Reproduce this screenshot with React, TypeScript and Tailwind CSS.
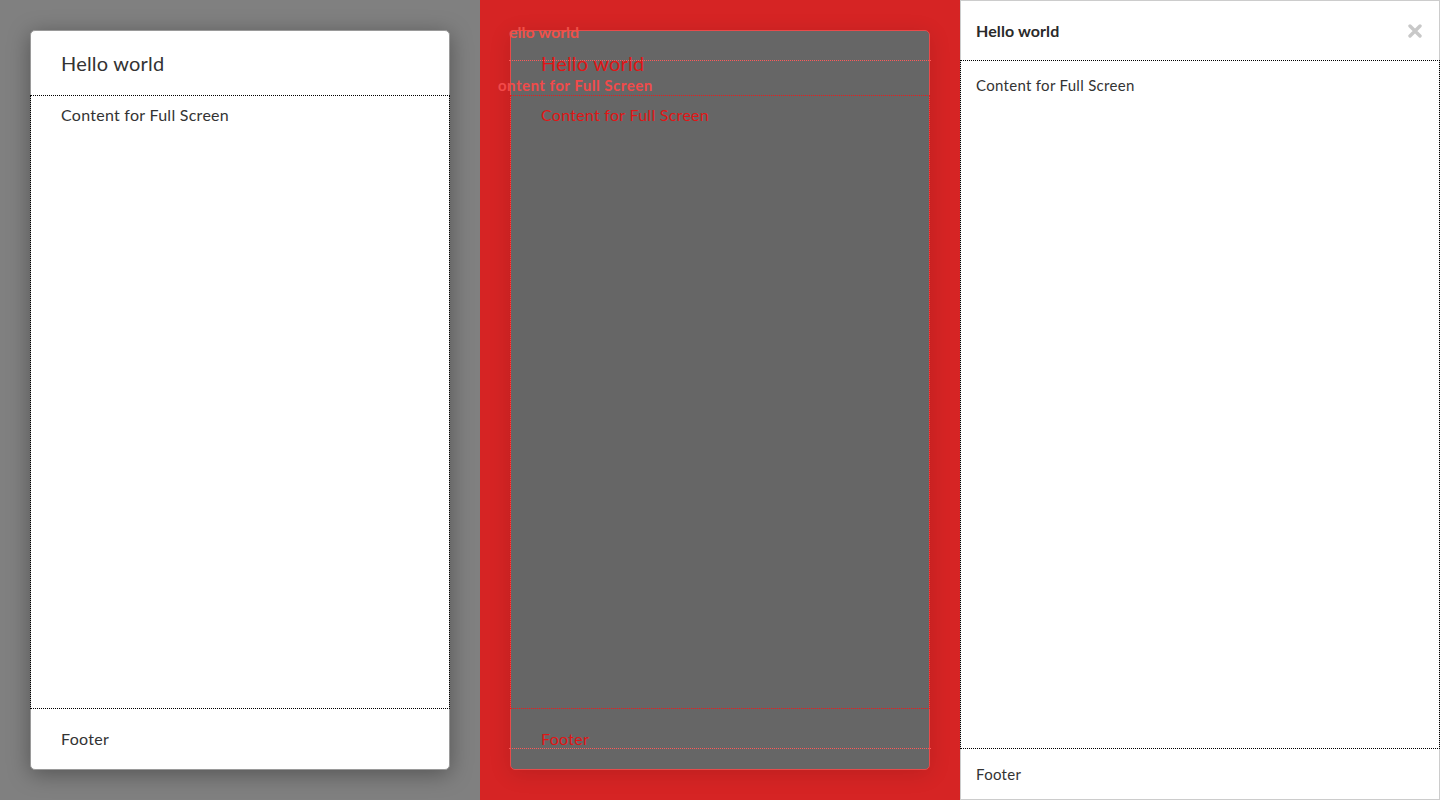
import React from "react";

const font = { fontFamily: "Lato, 'Open Sans', sans-serif" };

function CloseIcon() {
  return (
    <svg width="14" height="14" viewBox="0 0 14 14" className="block">
      <path d="M2 2 L12 12 M12 2 L2 12" stroke="#c8c8c8" strokeWidth="3.4" strokeLinecap="round" />
    </svg>
  );
}

export default function App() {
  return (
    <div className="flex w-[1440px] h-[800px] overflow-hidden" style={font}>
      {/* Column 1 */}
      <div className="w-[480px] h-full bg-[#808080] p-[30px]">
        <div className="h-[740px] flex flex-col bg-white rounded-[5px] border border-[#9a9a9a] shadow-[0_4px_22px_rgba(0,0,0,0.35)] text-[#333]">
          <div className="h-[64px] flex items-center pl-[30px] text-[20px] leading-[24px] tracking-[0.2px]">Hello world</div>
          <div className="flex-1 -mx-px border border-dotted border-black pl-[30px] pt-[9px] text-[16px] leading-[20px] tracking-[0.27px]">
            Content for Full Screen
          </div>
          <div className="h-[60px] flex items-center pl-[30px] text-[16px] tracking-[0.3px]">Footer</div>
        </div>
      </div>

      {/* Column 2 */}
      <div className="relative w-[480px] h-full bg-[#d62424] p-[30px]">
        <div className="h-[740px] flex flex-col bg-[#666666] rounded-[5px] border border-[#ea4a4a] shadow-[0_4px_22px_rgba(0,0,0,0.12)] text-[#e01616]">
          <div className="h-[64px] flex items-center pl-[30px] text-[20px] leading-[24px] tracking-[0.2px]">Hello world</div>
          <div className="flex-1 -mx-px border border-dotted border-[#ee1a1a] pl-[30px] pt-[9px] text-[16px] leading-[20px] tracking-[0.27px]">
            Content for Full Screen
          </div>
          <div className="h-[60px] flex items-center pl-[30px] text-[16px] tracking-[0.3px]">Footer</div>
        </div>
        {/* overlay of full-screen layout */}
        <div className="absolute left-[29px] top-[22px] text-[16px] leading-[20px] font-bold text-[#f05048] whitespace-nowrap">
          ello world
        </div>
        <div className="absolute left-[29px] top-[60px] w-[422px] border-t border-dotted border-[#ff5a5a]" />
        <div className="absolute left-[18px] top-[75px] text-[15px] leading-[20px] font-bold tracking-[0.5px] text-[#f24a4a] whitespace-nowrap">
          ontent for Full Screen
        </div>
        <div className="absolute left-[29px] top-[748px] w-[422px] border-t border-dotted border-[#ff5a5a]" />
      </div>

      {/* Column 3 */}
      <div className="w-[480px] h-full bg-white border border-[#cccccc] flex flex-col text-[#333]">
        <div className="h-[59px] flex items-center justify-between pl-[15px] pr-[17px]">
          <span className="text-[16px] font-bold leading-[20px] tracking-[0.1px] text-[#2a2a2a]">Hello world</span>
          <CloseIcon />
        </div>
        <div className="flex-1 -mx-px border border-dotted border-black pl-[15px] pt-[14px] text-[15px] leading-[20px] tracking-[0.3px]">
          Content for Full Screen
        </div>
        <div className="h-[50px] flex items-center pl-[15px] text-[15px] tracking-[0.3px]">Footer</div>
      </div>
    </div>
  );
}
